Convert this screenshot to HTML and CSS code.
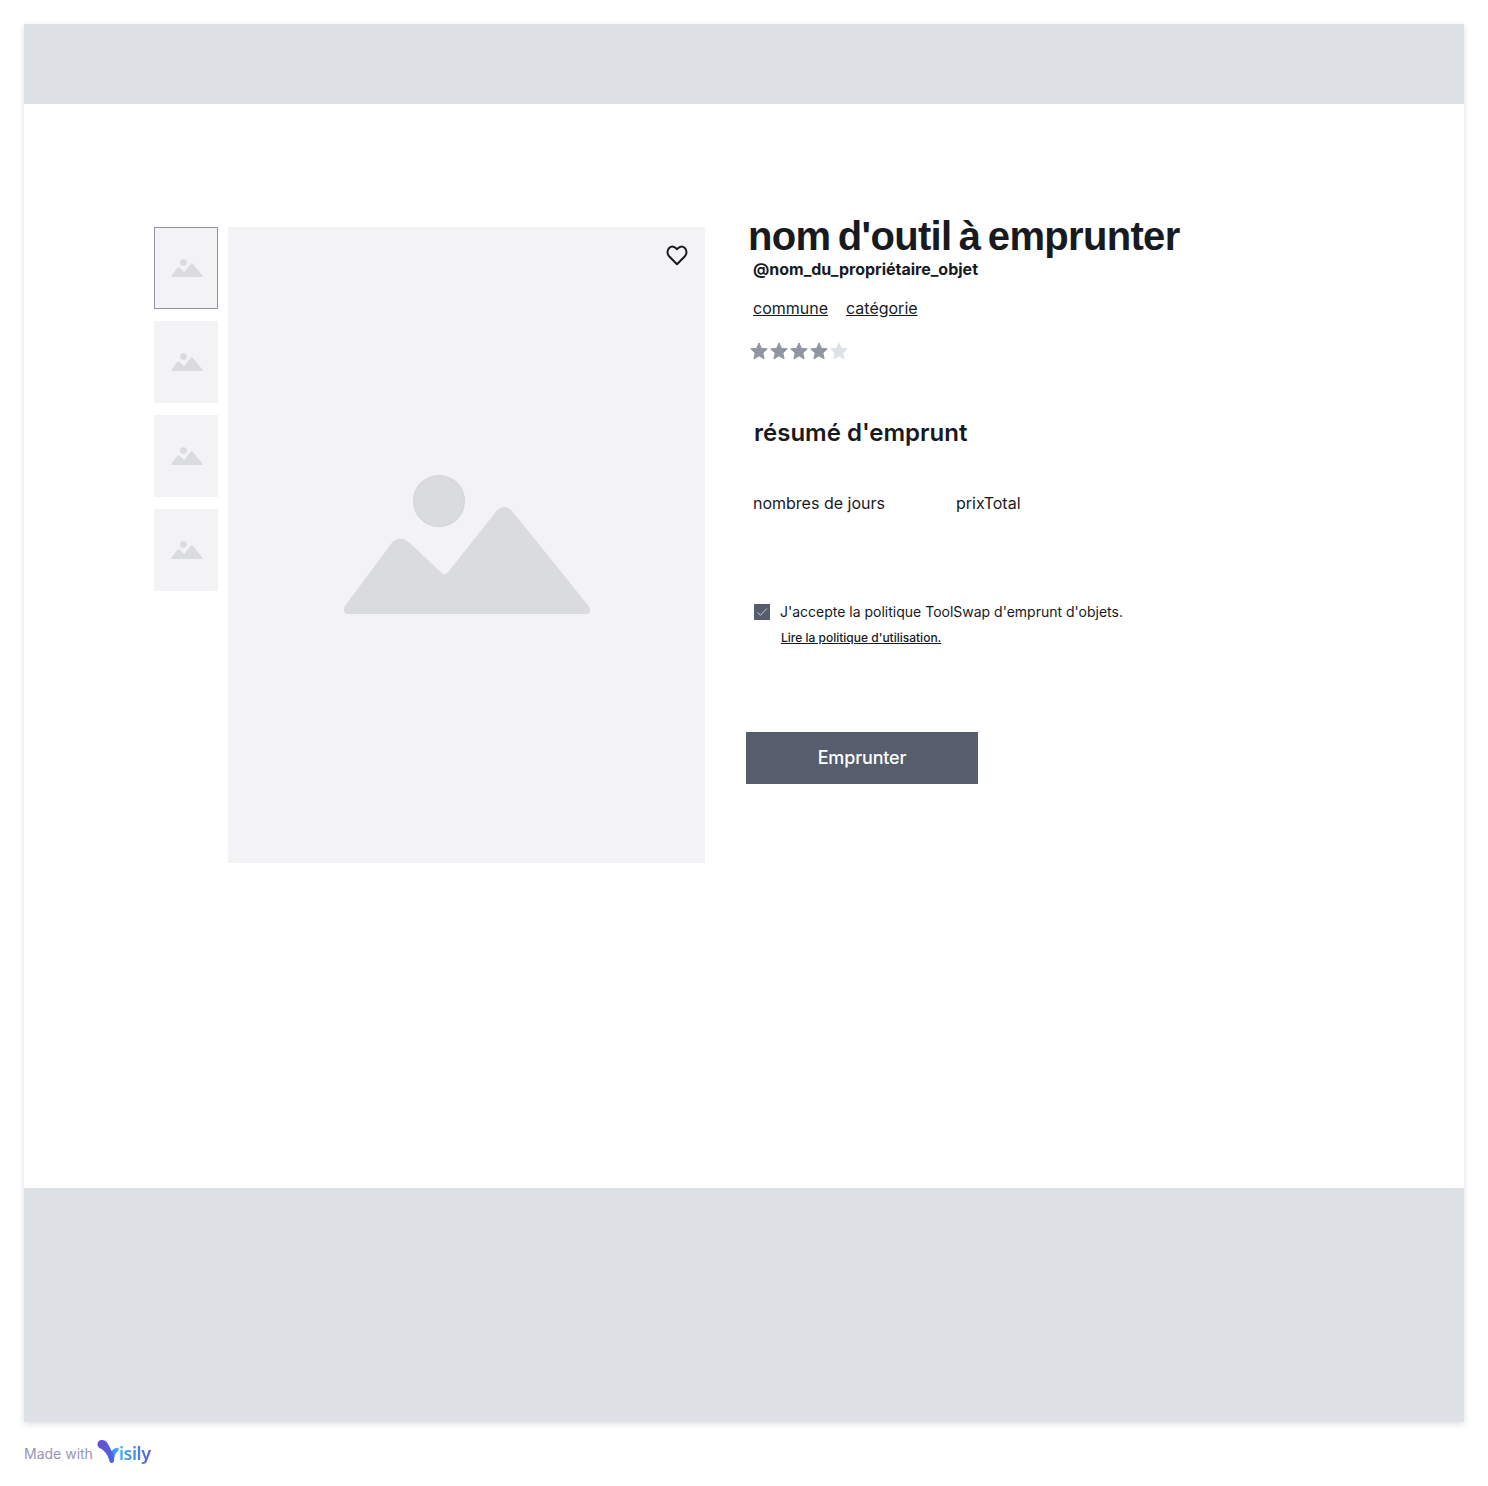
FILE: index.html
```html
<!DOCTYPE html>
<html lang="fr">
<head>
<meta charset="utf-8">
<title>Emprunter un outil</title>
<link rel="stylesheet" href="styles.css">
</head>
<body>
<svg class="defs" width="0" height="0" aria-hidden="true">
  <symbol id="landscape" viewBox="0 0 248 140">
    <circle cx="96" cy="27" r="25.3" stroke="#d6d7db" stroke-width="1.4"/>
    <path d="M1.6 132.500 48.500 69.200Q57 60.500 66 68.200L98.500 98.800Q101.300 102.200 104.500 98.800L152.200 38.700Q161 27.500 170.500 38.700L246 132.500Q249 138.500 243.500 140H4.500Q-.5 138.500 1.600 132.500Z"/>
  </symbol>
  <symbol id="star" viewBox="0 0 18 18">
    <path d="M9 .9 11.300 6.300 17.300 6.900 12.800 10.900 14.100 16.900 9 13.800 3.900 16.900 5.200 10.900 .7 6.900 6.700 6.300Z" stroke-width="1" stroke-linejoin="round" stroke="currentColor"/>
  </symbol>
</svg>
<div class="frame">
  <header class="header"></header>
  <main class="product">
    <div class="thumbs">
      <div class="thumb selected"><svg><use href="#landscape"/></svg></div>
      <div class="thumb"><svg><use href="#landscape"/></svg></div>
      <div class="thumb"><svg><use href="#landscape"/></svg></div>
      <div class="thumb"><svg><use href="#landscape"/></svg></div>
    </div>
    <div class="photo">
      <svg class="landscape"><use href="#landscape"/></svg>
      <svg class="heart" viewBox="0 0 24 24"><path d="M12 21.300 4.100 13.200C1.900 10.500 2 6.900 4.200 4.900 6.500 2.900 9.900 3.200 12 6.200 14.100 3.200 17.500 2.900 19.800 4.900 22 6.900 22.100 10.500 19.900 13.200Z"/></svg>
    </div>
    <section class="details">
      <h1>nom d'outil à emprunter</h1>
      <p class="owner">@nom_du_propriétaire_objet</p>
      <nav class="tags"><a>commune</a><a>catégorie</a></nav>
      <div class="rating">
        <svg><use href="#star"/></svg><svg><use href="#star"/></svg><svg><use href="#star"/></svg><svg><use href="#star"/></svg><svg class="empty"><use href="#star"/></svg>
      </div>
      <h2>résumé d'emprunt</h2>
      <div class="summary"><span class="days">nombres de jours</span><span class="total">prixTotal</span></div>
      <div class="terms">
        <span class="checkbox"><svg viewBox="0 0 16 16"><path d="M3.500 8.500 6.500 11.300 12.800 4.500"/></svg></span>
        <span class="accept">J'accepte la politique ToolSwap d'emprunt d'objets.</span>
      </div>
      <a class="policy">Lire la politique d'utilisation.</a>
      <button class="borrow"><span>Emprunter</span></button>
    </section>
  </main>
  <footer class="footer"></footer>
</div>
<div class="credit">
  <span class="made">Made with</span>
  <span class="brand">
    <svg viewBox="0 0 23 24">
      <defs>
        <linearGradient id="stem" x1="0" y1="0" x2="1" y2="1"><stop offset="0" stop-color="#6650d0"/><stop offset="1" stop-color="#4a66dc"/></linearGradient>
        <linearGradient id="leaf" x1="1" y1="0" x2="0" y2="1"><stop offset="0" stop-color="#35b5f3"/><stop offset="1" stop-color="#466cdd"/></linearGradient>
      </defs>
      <path fill="url(#leaf)" d="M21.500 7.800C17 7.500 14.300 10.500 13.300 15L13 22Q15.500 24 17 20.500C17.500 16 18.500 12 21.500 11Z"/>
      <path fill="url(#stem)" d="M4.800 0C7.800 0 9.500 1.600 11 4 13 7.500 15 11.500 16.200 14.500L17 20.500C16.500 23.500 13.500 23.800 12.500 21.300 11 16 9 12 4.500 9 2 8 .5 6.800.5 4.300.5 1.800 2.200 0 4.800 0Z"/>
    </svg>
    <span class="word">isily</span>
  </span>
</div>
</body>
</html>
```
FILE: styles.css
```css
* { box-sizing: border-box; }
body {
  margin: 0;
  padding: 24px;
  background: #fff;
  color: #171a1f;
  font-family: Inter, "Liberation Sans", sans-serif;
}
h1, h2, p { margin: 0; }
svg { display: block; }
.defs { position: absolute; }

.frame {
  width: 1440px;
  height: 1398px;
  display: flex;
  flex-direction: column;
  background: #fff;
  box-shadow: 0 2px 6px rgba(23, 26, 31, .14);
}
.header { height: 80px; background: #dee1e6; }
.footer { height: 234px; background: #dee1e6; }
.product {
  flex: 1;
  display: flex;
  align-items: flex-start;
  padding: 123px 130px 0;
}

.thumbs { display: flex; flex-direction: column; gap: 12px; margin-right: 10px; }
.thumb {
  width: 64px;
  height: 82px;
  display: flex;
  align-items: center;
  justify-content: center;
  padding-left: 1px;
  background: #f3f3f5;
  fill: #dadbdf;
}
.thumb svg { width: 32px; height: 18px; }
.thumb.selected { border: 1px solid #9095a0; }

.photo {
  width: 477px;
  height: 636px;
  position: relative;
  display: flex;
  justify-content: center;
  padding-top: 247px;
  background: #f3f3f5;
  fill: #dadbdf;
}
.landscape { width: 248px; height: 140px; }
.heart {
  position: absolute;
  top: 16px;
  right: 16px;
  width: 24px;
  height: 24px;
  fill: none;
  stroke: #171a1f;
  stroke-width: 2;
  stroke-linejoin: round;
}

.details {
  display: flex;
  flex-direction: column;
  align-items: flex-start;
  margin: -17px 0 0 41px;
  white-space: nowrap;
}
h1 {
  margin-left: 2px;
  font: 700 40px/52px "Liberation Sans", Arial, sans-serif;
  letter-spacing: -.68px;
  word-spacing: -3px;
}
.owner { margin-left: 7px; font-size: 16px; line-height: 26px; font-weight: 700; margin-top: -6px; }
.tags {
  display: flex;
  gap: 18px;
  margin: 13px 0 0 7px;
  font-size: 16px;
  line-height: 26px;
}
.tags a, .policy { text-decoration: underline; }
.rating { display: flex; gap: 2px; margin: 21px 0 0 4px; color: #9095a0; fill: currentColor; }
.rating svg { width: 18px; height: 18px; }
.rating .empty { color: #dee1e6; }
h2 { margin: 55px 0 0 8px; font-size: 24px; line-height: 36px; font-weight: 600; }
.summary { display: flex; margin: 39px 0 0 7px; font-size: 16px; line-height: 26px; }
.days { width: 203px; }
.terms { display: flex; align-items: center; gap: 10px; margin: 85px 0 0 8px; font-size: 14px; line-height: 22px; }
.checkbox { width: 16px; height: 16px; background: #565d6d; }
.checkbox path { fill: none; stroke: #c5c8cf; stroke-width: 1; }
.policy { margin: 5px 0 0 35px; font-size: 12px; line-height: 20px; font-weight: 500; }
.borrow {
  width: 232px;
  height: 52px;
  margin-top: 84px;
  padding: 0;
  border: 0;
  background: #565d6d;
  color: #fff;
  font: 500 18px/28px Inter, sans-serif;
  letter-spacing: -.15px;
}

.credit { display: flex; align-items: flex-start; margin-top: 18px; }
.made { width: 73px; padding-top: 4px; font-size: 14px; line-height: 20px; color: #9a94b3; }
.brand { display: flex; }
.brand svg { width: 23px; height: 24px; }
.word {
  margin-left: -1px;
  padding-top: 1px;
  font: 600 18px/24px "Noto Sans", sans-serif;
  letter-spacing: -.5px;
  background: linear-gradient(90deg, #38aef2, #4388e4 55%, #6354d2);
  background-clip: text;
  color: transparent;
}
```
